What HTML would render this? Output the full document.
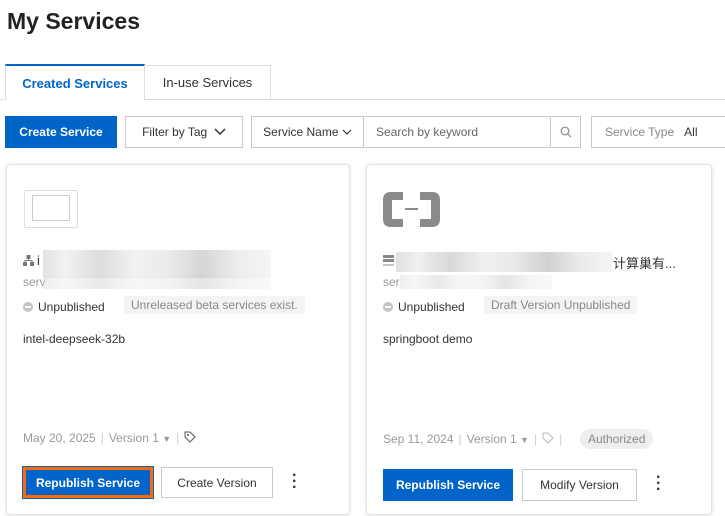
<!DOCTYPE html>
<html><head><meta charset="utf-8"><style>
*{box-sizing:border-box;margin:0;padding:0}
body{width:725px;height:516px;overflow:hidden;background:#fff;font-family:"Liberation Sans","Noto Sans CJK SC",sans-serif;color:#333;position:relative;font-size:12px}
.a{position:absolute}
.btn{position:absolute;display:flex;align-items:center;justify-content:center;font-size:12px;border:1px solid #c9c9c9;background:#fff;color:#333}
.blue{background:#0064c8;color:#fff;border-color:#0064c8;font-weight:bold}
.card{position:absolute;border:1px solid #e3e3e3;border-radius:4px;box-shadow:0 1px 4px rgba(0,0,0,.12);background:#fff}
.blur{position:absolute;background:linear-gradient(90deg,#ddd,#eee 10%,#d4d4d4 25%,#eee 40%,#e6e6e6 55%,#ccc 70%,#e8e8e8 85%,#f3f3f3)}
.gray{color:#999}
.dot{display:inline-block;width:10px;height:10px;border-radius:50%;background:#c4c4c4;position:relative;vertical-align:-1px;margin-right:5px}
.dot:after{content:"";position:absolute;left:2px;right:2px;top:4px;height:2px;background:#fff}
.tag{position:absolute;background:#f4f4f4;color:#888;padding:2px 7px;font-size:12px}
.sep{color:#ccc;margin:0 5px}
</style></head><body>
<div class="a" style="left:7px;top:8px;font-size:23px;font-weight:bold;color:#222">My Services</div>
<div class="a" style="left:0;top:99px;width:725px;height:1px;background:#ddd"></div>
<div class="a" style="left:5px;top:64px;width:140px;height:36px;border:1px solid #ddd;border-top:2px solid #0064c8;border-bottom:none;background:#fff;color:#0064c8;font-weight:bold;font-size:13px;display:flex;align-items:center;justify-content:center">Created Services</div>
<div class="a" style="left:144px;top:65px;width:127px;height:34px;border:1px solid #ddd;border-bottom:none;font-size:13px;display:flex;align-items:center;justify-content:center">In-use Services</div>
<div class="btn blue" style="left:5px;top:116px;width:112px;height:32px">Create Service</div>
<div class="btn" style="left:125px;top:116px;width:118px;height:32px">Filter by Tag&nbsp;&nbsp;<svg width="12" height="8"><path d="M1 1l5 5 5-5" stroke="#333" stroke-width="1.5" fill="none"/></svg></div>
<div class="btn" style="left:251px;top:116px;width:113px;height:32px">Service Name&nbsp;<svg width="10" height="7"><path d="M1 1l4 4 4-4" stroke="#333" stroke-width="1.2" fill="none"/></svg></div>
<div class="btn" style="left:363px;top:116px;width:188px;height:32px;justify-content:flex-start;padding-left:12px;color:#666">Search by keyword</div>
<div class="btn" style="left:550px;top:116px;width:31px;height:32px"><svg width="12" height="12"><circle cx="5" cy="5" r="3.8" stroke="#888" fill="none" stroke-width="1.2"/><path d="M8 8l3 3" stroke="#888" stroke-width="1.2"/></svg></div>
<div class="btn" style="left:591px;top:116px;width:140px;height:32px;justify-content:flex-start;padding-left:13px;color:#888">Service Type&nbsp;&nbsp;&nbsp;<span style="color:#333">All</span></div>

<div class="card" style="left:6px;top:164px;width:344px;height:351px"></div>
<div class="a" style="left:24px;top:190px;width:54px;height:38px;border:1px solid #ddd;border-radius:2px"><div style="position:absolute;left:7px;top:4px;width:38px;height:26px;border:1px solid #ccc"></div></div>
<svg class="a" style="left:23px;top:255px" width="11" height="11"><rect x="3.5" y="0" width="4" height="4" fill="#777"/><rect x="0" y="7" width="4" height="4" fill="#777"/><rect x="7" y="7" width="4" height="4" fill="#777"/><path d="M2 7V5.5h7V7M5.5 4v2" stroke="#777" fill="none"/></svg>
<div class="a" style="left:37px;top:253px;font-size:13px">i</div>
<div class="blur" style="left:43px;top:250px;width:228px;height:28px;opacity:.8"></div>
<div class="a gray" style="left:23px;top:275px;font-size:12px">serv</div>
<div class="blur" style="left:43px;top:275px;width:228px;height:14px;opacity:.5"></div>
<div class="a" style="left:23px;top:300px;font-size:12px"><span class="dot"></span>Unpublished</div>
<div class="tag" style="left:124px;top:296px">Unreleased beta services exist.</div>
<div class="a" style="left:23px;top:332px">intel-deepseek-32b</div>
<div class="a gray" style="left:23px;top:431px">May 20, 2025<span class="sep">|</span>Version 1 <span style="font-size:9px">▼</span><span class="sep">|</span><svg width="12" height="12" style="vertical-align:-1px"><path d="M1 1h5l5 5-5 5-5-5z" stroke="#555" fill="none"/><circle cx="4" cy="4" r="1" fill="#555"/></svg></div>
<div class="btn blue" style="left:23px;top:467px;width:130px;height:31px;border:3px solid #ff6a00;box-shadow:0 0 0 1px #0064c8">Republish Service</div>
<div class="btn" style="left:161px;top:467px;width:112px;height:31px">Create Version</div>
<div class="a" style="left:292px;top:473px;font-size:16px;font-weight:bold;line-height:6px">·<br>·<br>·</div>

<div class="card" style="left:366px;top:164px;width:346px;height:351px"></div>
<svg class="a" style="left:383px;top:192px" width="57" height="35"><path d="M20 0H8Q0 0 0 8v19q0 8 8 8h12v-8H9V8h11zM37 0h12q8 0 8 8v19q0 8-8 8H37v-8h11V8H37z" fill="#8a8a8a"/><rect x="22" y="16" width="13" height="2" fill="#8a8a8a"/></svg>
<svg class="a" style="left:383px;top:255px" width="11" height="12"><rect x="0" y="0" width="11" height="3" fill="#888"/><rect x="0" y="4" width="11" height="3" fill="#888"/><path d="M0 10h11" stroke="#888"/></svg>
<div class="blur" style="left:396px;top:252px;width:216px;height:20px;opacity:.9"></div>
<div class="a" style="left:613px;top:253px;font-size:13px">计算巢有...</div>
<div class="a gray" style="left:383px;top:275px">ser</div>
<div class="blur" style="left:400px;top:275px;width:152px;height:14px;opacity:.5"></div>
<div class="a" style="left:383px;top:300px"><span class="dot"></span>Unpublished</div>
<div class="tag" style="left:484px;top:296px">Draft Version Unpublished</div>
<div class="a" style="left:383px;top:332px">springboot demo</div>
<div class="a gray" style="left:383px;top:432px">Sep 11, 2024<span class="sep">|</span>Version 1 <span style="font-size:9px">▼</span><span class="sep">|</span><svg width="12" height="12" style="vertical-align:-1px"><path d="M1 1h5l5 5-5 5-5-5z" stroke="#bbb" fill="none"/></svg><span class="sep">|</span></div>
<div class="a" style="left:580px;top:429px;background:#eee;color:#888;border-radius:10px;padding:3px 8px">Authorized</div>
<div class="btn blue" style="left:383px;top:469px;width:130px;height:32px">Republish Service</div>
<div class="btn" style="left:522px;top:469px;width:115px;height:32px">Modify Version</div>
<div class="a" style="left:656px;top:475px;font-size:16px;font-weight:bold;line-height:6px">·<br>·<br>·</div>
</body></html>
